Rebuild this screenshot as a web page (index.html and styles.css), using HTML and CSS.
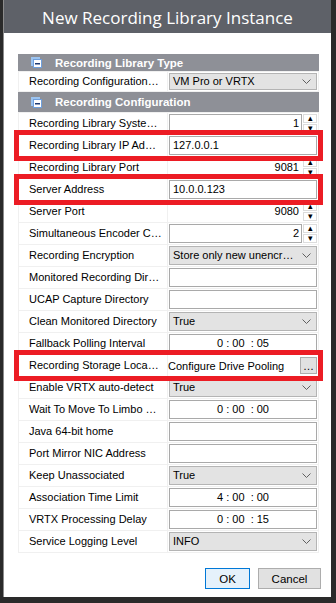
FILE: index.html
```html
<!DOCTYPE html>
<html lang="en">
<head>
    <meta charset="UTF-8">
    <title>New Recording Library Instance</title>
    <link rel="stylesheet" href="styles.css">
</head>
<body>

    <div class="window">
        <div class="titlebar">New Recording Library Instance</div>

        <div class="content">
            <div class="grid">
                <div class="section first">
                    <svg class="toggle" width="11" height="11" viewBox="0 0 11 11"><path d="M0 0h9v2h-7v7h-2z" fill="#9cc4f0"/><rect x="2.5" y="2.5" width="8" height="8" fill="#fff" stroke="#6f9fdc"/><rect x="4" y="6" width="5" height="1.5" fill="#1d3a74"/></svg>
                    Recording Library Type
                </div>
                <div class="row short">
                    <div class="label">Recording Configuration…</div>
                    <div class="value"><div class="field select">VM Pro or VRTX<svg class="chev" width="9" height="5" viewBox="0 0 9 5"><polyline points="0.5,0.5 4.5,4.5 8.5,0.5" fill="none" stroke="#606060"/></svg></div></div>
                </div>
                <div class="section">
                    <svg class="toggle" width="11" height="11" viewBox="0 0 11 11"><path d="M0 0h9v2h-7v7h-2z" fill="#9cc4f0"/><rect x="2.5" y="2.5" width="8" height="8" fill="#fff" stroke="#6f9fdc"/><rect x="4" y="6" width="5" height="1.5" fill="#1d3a74"/></svg>
                    Recording Configuration
                </div>

                <div class="row">
                    <div class="label">Recording Library Syste…</div>
                    <div class="value spin"><div class="field num">1</div><div class="arrows"><span>▴</span><span>▾</span></div></div>
                </div>
                <div class="row marked">
                    <div class="label">Recording Library IP Ad…</div>
                    <div class="value"><div class="field">127.0.0.1</div></div>
                </div>
                <div class="row">
                    <div class="label">Recording Library Port</div>
                    <div class="value spin"><div class="field num bare">9081</div><div class="arrows"><span>▴</span><span>▾</span></div></div>
                </div>
                <div class="row marked">
                    <div class="label">Server Address</div>
                    <div class="value"><div class="field">10.0.0.123</div></div>
                </div>
                <div class="row">
                    <div class="label">Server Port</div>
                    <div class="value spin"><div class="field num bare">9080</div><div class="arrows"><span>▴</span><span>▾</span></div></div>
                </div>
                <div class="row">
                    <div class="label">Simultaneous Encoder C…</div>
                    <div class="value spin"><div class="field num">2</div><div class="arrows"><span>▴</span><span>▾</span></div></div>
                </div>
                <div class="row">
                    <div class="label">Recording Encryption</div>
                    <div class="value"><div class="field select">Store only new unencr…<svg class="chev" width="9" height="5" viewBox="0 0 9 5"><polyline points="0.5,0.5 4.5,4.5 8.5,0.5" fill="none" stroke="#606060"/></svg></div></div>
                </div>
                <div class="row">
                    <div class="label">Monitored Recording Dir…</div>
                    <div class="value"><div class="field"></div></div>
                </div>
                <div class="row">
                    <div class="label">UCAP Capture Directory</div>
                    <div class="value"><div class="field"></div></div>
                </div>
                <div class="row">
                    <div class="label">Clean Monitored Directory</div>
                    <div class="value"><div class="field select">True<svg class="chev" width="9" height="5" viewBox="0 0 9 5"><polyline points="0.5,0.5 4.5,4.5 8.5,0.5" fill="none" stroke="#606060"/></svg></div></div>
                </div>
                <div class="row">
                    <div class="label">Fallback Polling Interval</div>
                    <div class="value"><div class="field time">0 : 00 &nbsp;: 05</div></div>
                </div>
                <div class="row marked">
                    <div class="label">Recording Storage Loca…</div>
                    <div class="value link"><span class="plain">Configure Drive Pooling</span><button class="dots">…</button></div>
                </div>
                <div class="row">
                    <div class="label">Enable VRTX auto-detect</div>
                    <div class="value"><div class="field select">True<svg class="chev" width="9" height="5" viewBox="0 0 9 5"><polyline points="0.5,0.5 4.5,4.5 8.5,0.5" fill="none" stroke="#606060"/></svg></div></div>
                </div>
                <div class="row">
                    <div class="label">Wait To Move To Limbo …</div>
                    <div class="value"><div class="field time">0 : 00 &nbsp;: 00</div></div>
                </div>
                <div class="row">
                    <div class="label">Java 64-bit home</div>
                    <div class="value"><div class="field"></div></div>
                </div>
                <div class="row">
                    <div class="label">Port Mirror NIC Address</div>
                    <div class="value"><div class="field"></div></div>
                </div>
                <div class="row">
                    <div class="label">Keep Unassociated</div>
                    <div class="value"><div class="field select">True<svg class="chev" width="9" height="5" viewBox="0 0 9 5"><polyline points="0.5,0.5 4.5,4.5 8.5,0.5" fill="none" stroke="#606060"/></svg></div></div>
                </div>
                <div class="row">
                    <div class="label">Association Time Limit</div>
                    <div class="value"><div class="field time">4 : 00 &nbsp;: 00</div></div>
                </div>
                <div class="row">
                    <div class="label">VRTX Processing Delay</div>
                    <div class="value"><div class="field time">0 : 00 &nbsp;: 15</div></div>
                </div>
                <div class="row">
                    <div class="label">Service Logging Level</div>
                    <div class="value"><div class="field select">INFO<svg class="chev" width="9" height="5" viewBox="0 0 9 5"><polyline points="0.5,0.5 4.5,4.5 8.5,0.5" fill="none" stroke="#606060"/></svg></div></div>
                </div>
            </div>

            <div class="actions">
                <button class="btn default">OK</button>
                <button class="btn">Cancel</button>
            </div>
        </div>
    </div>

</body>
</html>
```

FILE: styles.css
```css
/* Dialog shell */
body {
    margin: 0;
    background: #2a2a2a;
    font-family: 'Liberation Sans', Arial, sans-serif;
    font-size: 11px;
    color: #000;
}

.window {
    margin-left: 3px;
    width: 328px;
    height: 597px;
    background: white;
    border-left: 1px solid #8c8c8c;
    box-sizing: border-box;
}

.titlebar {
    height: 33px;
    background: #5e6168;
    color: white;
    font-family: 'Open Sans', sans-serif;
    font-size: 17px;
    line-height: 35px;
    text-align: center;
}

.content {
    padding: 21px 10px 0 14px;
}

/* Property grid */
.grid {
    width: 301px;
    display: flex;
    flex-direction: column;
    gap: 1px;
    background: #f0f0f0;
    border: 1px solid #f0f0f0;
    border-top: none;
    box-sizing: border-box;
}

.section {
    height: 20px;
    display: flex;
    align-items: center;
    gap: 13px;
    padding-left: 13px;
    margin: 0 -1px;
    background: #8e9097;
    color: white;
    font-weight: bold;
    font-size: 11.5px;
}

.section.first {
    height: 17px;
}

.toggle {
    flex: none;
}

.row {
    height: 21px;
    display: grid;
    grid-template-columns: 148px 1fr;
    gap: 1px;
}

.row.short {
    height: 19px;
}

.row.marked {
    position: relative;
    z-index: 1;
    outline: 5px solid #ec1c24;
}

.label {
    background: white;
    padding-left: 10px;
    line-height: 21px;
    white-space: nowrap;
    overflow: hidden;
}

.row.short .label {
    line-height: 19px;
}

.value {
    background: white;
    padding: 1px;
    display: flex;
    gap: 1px;
    min-width: 0;
}

.field {
    flex: 1;
    border: 1px solid #a9a9a9;
    padding: 0 3px;
    line-height: 17px;
    white-space: nowrap;
    overflow: hidden;
}

.row.short .field {
    line-height: 15px;
}

.select {
    display: flex;
    align-items: center;
    justify-content: space-between;
    background: #e3e3e3;
    border-color: #b4b4b4;
}

.chev {
    flex: none;
    margin-right: 2px;
}

.num {
    text-align: right;
    padding-right: 2px;
}

.num.bare {
    border-color: transparent;
}

.time {
    text-align: center;
}

.arrows {
    width: 14px;
    display: flex;
    flex-direction: column;
    gap: 1px;
}

.arrows span {
    flex: 1;
    border: 1px solid #dcdcdc;
    font-size: 9px;
    line-height: 7px;
    text-align: center;
    overflow: hidden;
}

.link {
    align-items: center;
    justify-content: space-between;
    padding-left: 0;
}

.plain {
    white-space: nowrap;
}

.dots {
    width: 17px;
    height: 17px;
    padding: 0;
    border: 1px solid #adadad;
    background: #e1e1e1;
    font-family: 'Liberation Sans', sans-serif;
    font-size: 11px;
    line-height: 10px;
}

/* Buttons */
.actions {
    display: flex;
    justify-content: flex-end;
    gap: 8px;
    margin-top: 15px;
}

.btn {
    width: 63px;
    height: 21px;
    padding: 0;
    border: 1px solid #adadad;
    background: #e1e1e1;
    font-family: 'Liberation Sans', sans-serif;
    font-size: 11.5px;
    color: #000;
}

.btn.default {
    width: 45px;
    border-color: #0078d7;
    background: #e5f1fb;
}
```
